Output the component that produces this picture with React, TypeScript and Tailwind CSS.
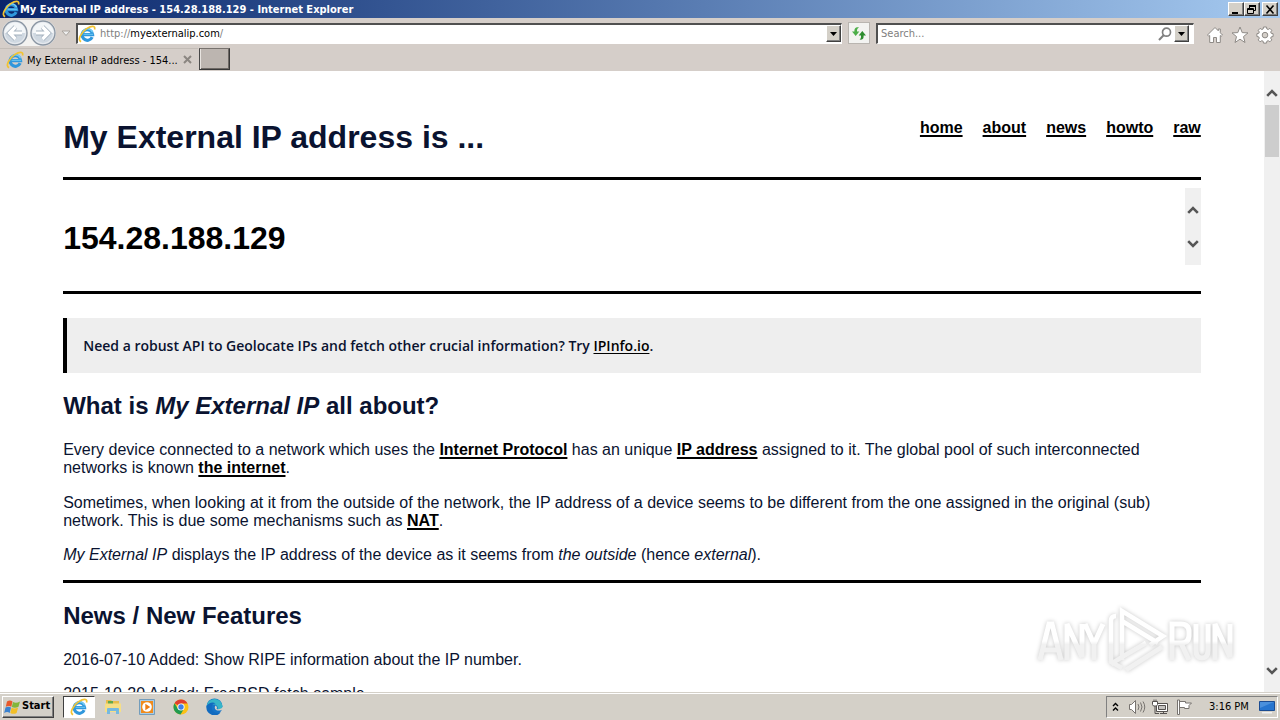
import type { ReactNode } from "react";

const linkClass = "font-bold text-black underline decoration-2 underline-offset-2 [text-decoration-skip-ink:none]";

function IELogo({ size = 16 }: { size?: number }) {
  return (
    <svg width={size} height={size} viewBox="0 0 16 16" className="shrink-0" aria-hidden="true">
      <path d="M12.600 10.800A4.700 4.700 0 1 1 13 8.600H4.600" fill="none" stroke="#2f97dc" strokeWidth="2.800" />
      <path d="M4.100 6.800Q5.500 3.500 8.500 3.500t4.500 3" fill="none" stroke="#74cdf5" strokeWidth="1.200" />
      <path d="M5 8.300h8.500" stroke="#67c4f1" strokeWidth="1" />
      <path d="M2.800 14.800C-1 13.800 2.600 6.500 8 3 12 .5 15.800.3 14.700 4" fill="none" stroke="#f2c331" strokeWidth="1.500" />
    </svg>
  );
}

function Triangle() {
  return (
    <svg width="7" height="4" viewBox="0 0 7 4" aria-hidden="true">
      <path d="M0 0h7L3.500 4z" fill="#000" />
    </svg>
  );
}

function Chevron({ up = false }: { up?: boolean }) {
  return (
    <svg width="12" height="8" viewBox="0 0 12 8" aria-hidden="true">
      <path d={up ? "M1.200 6.800 6 2l4.800 4.800" : "M1.200 1.200 6 6l4.800-4.800"} fill="none" stroke="#555" strokeWidth="2.600" />
    </svg>
  );
}

const raised = "border border-t-white border-l-white border-r-[#404040] border-b-[#404040] bg-[#d4d0c8] shadow-[inset_-1px_-1px_0_#808080]";

function WindowButton({ label, children }: { label: string; children: ReactNode }) {
  return (
    <button aria-label={label} className={`flex h-[14px] w-4 items-center justify-center ${raised}`}>
      <svg width="12" height="11" viewBox="0 0 12 11" fill="none" stroke="#000" aria-hidden="true">{children}</svg>
    </button>
  );
}

function TitleBar() {
  return (
    <header className="flex h-[18px] shrink-0 items-center bg-linear-to-r from-[#0a246a] to-[#a6caf0] px-[2px]">
      <IELogo size={18} />
      <span className="flex-1 pt-[1px] text-[11px] leading-[16px] font-bold text-white">My External IP address - 154.28.188.129 - Internet Explorer</span>
      <WindowButton label="Minimize"><path d="M2 9h6" strokeWidth="2" /></WindowButton>
      <WindowButton label="Restore">
        <path d="M4 1.500h6M3.500 1v3M9.500 1v5.500H8" />
        <path d="M3.500 2.500h6M1.500 5.500h6M1.500 4.500h6v5h-6z" />
      </WindowButton>
      <span className="w-[2px]" />
      <WindowButton label="Close"><path d="m2.500 1.500 7 8m0-8-7 8" strokeWidth="1.600" /></WindowButton>
    </header>
  );
}

function NavButton({ label, back = false }: { label: string; back?: boolean }) {
  const arrow = back ? "M20 13H8m5.500-6-6 6 6 6" : "M6 13h12m-5.500-6 6 6-6 6";
  return (
    <button aria-label={label} className="size-[26px]">
      <svg width="26" height="26" viewBox="0 0 26 26" aria-hidden="true">
        <circle cx="13" cy="13" r="12" fill="#e4e8ed" stroke="#8b96a3" strokeWidth="1.400" />
        <path d="M2.500 13a10.500 10.500 0 0 1 21 0z" fill="#f3f6f8" />
        <path d="M3 13h20a10 10 0 0 1-20 0z" fill="#cfd8e1" />
        <path d={arrow} fill="none" stroke="#a3b0bd" strokeWidth="4.800" />
        <path d={arrow} fill="none" stroke="#fff" strokeWidth="3.200" />
      </svg>
    </button>
  );
}

const field = "flex h-[21px] items-center border-t-2 border-l-2 border-r border-b border-t-[#505050] border-l-[#505050] border-r-white border-b-white bg-white";

function AddressBar() {
  return (
    <div className="flex h-[30px] shrink-0 items-center pr-[6px] pl-[2px]">
      <div className="flex gap-[2px] rounded-full bg-[#f3f2f0]">
        <NavButton label="Back" back />
        <NavButton label="Forward" />
      </div>
      <button aria-label="Recent pages" className="flex w-[20px] justify-center">
        <svg width="10" height="7" viewBox="0 0 10 7" aria-hidden="true"><path d="M1 1h8L5 5.500z" fill="#eee" stroke="#aaa49e" /></svg>
      </button>
      <div className={`flex-1 ${field}`}>
        <IELogo size={18} />
        <div className="ml-1 flex h-[18px] flex-1 items-center text-[11px] leading-[16px] text-[#808080]">
          <label htmlFor="address">http://</label>
          <input id="address" defaultValue="myexternalip.com" className="field-sizing-content h-4 text-black outline-none" />
          <span>/</span>
        </div>
        <button aria-label="Show address history" className={`flex h-[17px] w-[15px] items-center justify-center ${raised}`}><Triangle /></button>
      </div>
      <button aria-label="Refresh" className="mx-[6px] flex size-[22px] items-center justify-center border border-[#b9b5b0] bg-[#f3f3f1]">
        <svg width="16" height="15" viewBox="0 0 16 15" aria-hidden="true">
          <path d="M8 1.500C4.500.800 3.200 2.500 3.400 5.500H1L4.700 10l3.600-4.500H6C5.900 3.500 6.300 2.200 8 1.500z" fill="#4cae48" />
          <path d="M8.500 13.500c3.500.7 4.300-1 4.100-4H15L11.300 5 7.700 9.500H10c.1 2 0 3.300-1.500 4z" fill="#2c8c2e" />
        </svg>
      </button>
      <div className={`w-[318px] pr-1 pl-[3px] ${field}`}>
        <input aria-label="Search" placeholder="Search..." className="h-4 min-w-0 flex-1 text-[11px] leading-[16px] outline-none placeholder:text-[#808080]" />
        <button aria-label="Start search" className="mr-[2px]">
          <svg width="14" height="14" viewBox="0 0 14 14" fill="none" stroke="#808080" aria-hidden="true">
            <circle cx="8.500" cy="5.200" r="4" strokeWidth="1.700" />
            <path d="M5.600 8.200 1 13" strokeWidth="2" />
          </svg>
        </button>
        <button aria-label="Search options" className={`flex h-[17px] w-[15px] items-center justify-center ${raised}`}><Triangle /></button>
      </div>
      <div className="ml-3 flex items-center gap-[7px] pt-1">
        <button aria-label="Home">
          <svg width="18" height="18" viewBox="0 0 18 18" fill="#fff" stroke="#8e8a86" strokeLinejoin="round" aria-hidden="true">
            <path d="M9 1.500 1.500 9l1.300 1.300.9-.8V16.500h3.800v-5h3v5h3.800v-7l.9.8L16.500 9l-2.200-2.200V3h-2v1.800z" />
          </svg>
        </button>
        <button aria-label="Favorites">
          <svg width="18" height="18" viewBox="0 0 18 18" fill="#fff" stroke="#8e8a86" strokeLinejoin="round" aria-hidden="true">
            <path d="m9 1 2.200 5.600 5.800.3-4.500 3.700L14 16.500 9 13.200l-5 3.300 1.500-5.900L1 6.900l5.800-.3z" />
          </svg>
        </button>
        <button aria-label="Tools">
          <svg width="18" height="18" viewBox="0 0 18 18" fill="#fff" stroke="#8e8a86" strokeLinejoin="round" aria-hidden="true">
            <path d="m7.500 1h3l.4 2 1.300.5 1.700-1.100 1.900 1.900-1.100 1.700.5 1.300 1.900.4v2.800l-1.900.4-.5 1.300 1.100 1.700-1.900 1.900-1.700-1.100-1.300.5-.4 1.900h-3l-.4-1.900-1.300-.5-1.700 1.100-1.900-1.900 1.100-1.700-.5-1.300L.9 10.500V7.700l1.900-.4.5-1.300-1.100-1.700 1.900-1.900 1.700 1.100L7.100 3z" />
            <circle cx="9" cy="9.100" r="2.800" fill="#d4cfc9" />
          </svg>
        </button>
      </div>
    </div>
  );
}

function TabStrip() {
  return (
    <div className="flex h-[23px] shrink-0 items-start">
      <div className="flex h-[22px] w-[198px] items-center border-t border-[#c3bdb7] pl-[6px]">
        <IELogo size={18} />
        <button className="ml-[3px] w-[154px] pt-[2px] text-left text-[11px] leading-[16px] whitespace-nowrap">My External IP address - 154...</button>
        <button aria-label="Close tab" className="ml-[2px]">
          <svg width="9" height="9" viewBox="0 0 9 9" stroke="#8b8681" strokeWidth="2" aria-hidden="true"><path d="m1 1 7 7m0-7L1 8" /></svg>
        </button>
      </div>
      <button aria-label="New tab" className="ml-[1px] h-[22px] w-[31px] border border-t-[#77726e] border-r-[#383838] border-b-[#383838] border-l-[#484848] bg-[#bcb5b0] shadow-[inset_1px_0_0_#e8e4e0,inset_-1px_-1px_0_#6e6965]" />
    </div>
  );
}

function Rule() {
  return <hr className="border-t-[3px] border-black" />;
}

const headingClass = "mt-[19px] text-[24px] leading-[27px] font-bold";

function Article() {
  return (
    <main className="px-[5%] text-[16px] leading-[18px] text-[#0a1330]">
      <div className="flex items-start justify-between pt-12 pb-[22px]">
        <h1 className="text-[32px] leading-[36px] font-bold">My External IP address is ...</h1>
        <nav className="flex gap-5">
          {["home", "about", "news", "howto", "raw"].map((item) => (
            <a key={item} href={`#${item}`} className={linkClass}>{item}</a>
          ))}
        </nav>
      </div>
      <Rule />
      <div className="flex justify-between pt-2 pb-[26px]">
        <p className="pt-8 text-[32px] leading-[36px] font-bold text-black">154.28.188.129</p>
        <div className="flex h-[77px] w-4 flex-col items-center justify-center gap-[26px] bg-[#f0f0f0]">
          <Chevron up />
          <Chevron />
        </div>
      </div>
      <Rule />
      <p className="mt-6 border-l-4 border-black bg-[#eee] py-[18px] pl-4 font-['Open_Sans',sans-serif] text-[14px] leading-[19px] font-semibold">
        Need a robust API to Geolocate IPs and fetch other crucial information? Try{" "}
        <a href="#ipinfo" className="text-black underline decoration-1 underline-offset-2 [text-decoration-skip-ink:none]">IPInfo.io</a>.
      </p>
      <h2 className={headingClass}>What is <em>My External IP</em> all about?</h2>
      <p className="mt-[22px]">
        Every device connected to a network which uses the <a href="#protocol" className={linkClass}>Internet Protocol</a> has an unique{" "}
        <a href="#ip-address" className={linkClass}>IP address</a> assigned to it. The global pool of such interconnected networks is known{" "}
        <a href="#internet" className={linkClass}>the internet</a>.
      </p>
      <p className="mt-[17px]">
        Sometimes, when looking at it from the outside of the network, the IP address of a device seems to be different from the one assigned in
        the original (sub) network. This is due some mechanisms such as <a href="#nat" className={linkClass}>NAT</a>.
      </p>
      <p className="my-4">
        <em>My External IP</em> displays the IP address of the device as it seems from <em>the outside</em> (hence <em>external</em>).
      </p>
      <Rule />
      <h2 className={headingClass}>News / New Features</h2>
      <p className="mt-[22px]">2016-07-10 Added: Show RIPE information about the IP number.</p>
      <p className="mt-4">2015-10-20 Added: FreeBSD fetch sample.</p>
    </main>
  );
}

function Watermark() {
  return (
    <div className="pointer-events-none absolute right-11 bottom-4" aria-hidden="true">
      <svg width="200" height="70" viewBox="0 0 200 70" className="drop-shadow-[0_0_2px_rgba(0,0,0,0.22)]">
        <defs>
          <linearGradient id="mark" gradientUnits="userSpaceOnUse" x1="0" y1="0" x2="0" y2="70">
            <stop offset="0.5" stopColor="#ffffff" />
            <stop offset="0.55" stopColor="#f1f1f1" />
          </linearGradient>
        </defs>
        <g fill="none" stroke="url(#mark)" strokeWidth="5">
          <path d="M4 54 13 18h3l9 36M8 44h13M31 54V18l15 33V18M49 18l9 20 9-20M58 36v18" />
          <path d="M80 10q-5 0-5 5v41l11 6M86 54V5l41 25-13 9M86 15l36 22M90 64l36-23M75 58l11-7 24-14" strokeWidth="4.500" />
          <path d="M136 54V18h9q8 0 8 8v3q0 8-8 8h-9m9 0 8 17M160 18v26q0 8 6 8t6-8V18M179 54V18l15 33V18" />
        </g>
      </svg>
    </div>
  );
}

function PageScrollbar() {
  return (
    <div className="flex w-4 shrink-0 flex-col items-center bg-[#f0f0f0] pt-[18px] pb-[17px]">
      <Chevron up />
      <div className="mt-2 h-[52px] w-[14px] bg-[#cdcdcd]" />
      <div className="flex-1" />
      <Chevron />
    </div>
  );
}

function Taskbar() {
  return (
    <footer className="flex h-7 shrink-0 items-center border-t border-[#d4d0c8] bg-[#d4d0c8] px-[2px] shadow-[inset_0_1px_0_#fff]">
      <button className={`flex h-[22px] w-[52px] items-center gap-[1px] pl-[1px] text-[11px] font-bold ${raised}`}>
        <svg width="17" height="16" viewBox="0 0 17 16" className="shrink-0" aria-hidden="true">
          <path d="M3 2.500q3-2 5.500 0L7.300 7.800Q5 6 1.800 7.800z" fill="#e8592b" />
          <path d="M9 3q3 1.700 7-.5l-1.500 5.300Q11 9.500 7.800 8z" fill="#83b63b" />
          <path d="M1.500 8.500q3-1.500 5.500 0l-1.300 5.500q-2.500-2-5.500 0z" fill="#3b82d0" />
          <path d="M7.600 8.800q3 1.500 6.500-.3L12.600 14q-3 1.700-6.300 0z" fill="#f2bf27" />
        </svg>
        Start
      </button>
      <nav aria-label="Running programs" className="ml-[9px] flex items-center gap-[1px]">
        <button aria-label="Internet Explorer" className="flex h-[22px] w-8 items-center justify-center border border-t-[#404040] border-l-[#404040] border-r-white border-b-white bg-white"><IELogo size={18} /></button>
        <button aria-label="File Explorer" className="flex w-[33px] justify-center">
          <svg width="18" height="17" viewBox="0 0 18 17" aria-hidden="true">
            <path d="M2 2h5l1 1h7v11H2z" fill="#e7bd4d" />
            <path d="M4 3h5v3H4z" fill="#61a84d" />
            <path d="M1 5.500h16V14H1z" fill="#f6df86" />
            <path d="M3 16v-5q0-1 1-1h10q1 0 1 1v5h-3v-3H6v3z" fill="#76b9df" />
          </svg>
        </button>
        <button aria-label="Media Player" className="flex w-[33px] justify-center">
          <svg width="16" height="16" viewBox="0 0 16 16" aria-hidden="true">
            <path d="M.5.500h15v15H.500z" fill="#a9cce6" stroke="#739dbc" />
            <path d="M2 2h12v12H2z" fill="#f08b1d" />
            <circle cx="8" cy="8" r="4.800" fill="#fff" />
            <path d="m6.300 4.800 5 3.200-5 3.200z" fill="#ed7d15" />
          </svg>
        </button>
        <button aria-label="Chrome" className="flex w-[33px] justify-center">
          <svg width="16" height="16" viewBox="0 0 16 16" aria-hidden="true">
            <circle cx="8" cy="8" r="7.500" fill="#fbc116" />
            <path d="M8 8 1.500 4.200A7.500 7.500 0 0 1 14.500 4.500H8z" fill="#df3e30" />
            <path d="M1.500 4.200A7.500 7.500 0 0 0 7.500 15.500L11 9.700 5 10z" fill="#219b51" />
            <circle cx="8" cy="8" r="3.600" fill="#fff" />
            <circle cx="8" cy="8" r="2.700" fill="#3e80e8" />
          </svg>
        </button>
        <button aria-label="Edge" className="flex w-[33px] justify-center">
          <svg width="17" height="17" viewBox="0 0 17 17" aria-hidden="true">
            <circle cx="8.500" cy="8.500" r="8" fill="#1674c8" />
            <path d="M.6 8A8 8 0 0 1 16.500 8c0 3-2.500 4-5 3.500 1-3-1-5-4-5S2 7.500.6 8z" fill="#37b5c8" />
            <path d="M.6 8c2-3 6-4.500 9-2.500-4 0-5 4-3 7 2 2.500 5 3 8 2A8 8 0 0 1 .6 8z" fill="#126bbf" />
            <path d="M9.500 7.500c-1.500 2-.5 4.500 2 5 2 .4 4-.2 5.500-1.500V8.500c-1 2.500-4.500 3.300-6.500 2.500 1-1 .5-2.500-1-3.500z" fill="#d4d0c8" />
          </svg>
        </button>
      </nav>
      <div className="ml-auto flex h-[22px] w-[172px] items-center border border-t-[#808080] border-l-[#808080] border-r-white border-b-white pr-[2px] pl-[5px]">
        <button aria-label="Show hidden icons">
          <svg width="7" height="10" viewBox="0 0 7 10" fill="none" stroke="#000" strokeWidth="1.400" aria-hidden="true"><path d="m1 4 2.500-2.500L6 4M1 8.500 3.500 6 6 8.500" /></svg>
        </button>
        <button aria-label="Volume" className="ml-[9px]">
          <svg width="18" height="16" viewBox="0 0 18 16" fill="none" stroke="#77736f" aria-hidden="true">
            <path d="M1.500 5.500h2l4-4v13l-4-4h-2z" fill="#fff" /><path d="M10 5q2 3 0 6M12.500 3.500q3 4.500 0 9M15 2.500q3.500 5.500 0 11" />
          </svg>
        </button>
        <button aria-label="Network" className="ml-[6px]">
          <svg width="17" height="16" viewBox="0 0 17 16" stroke="#55514f" fill="#fff" aria-hidden="true">
            <path d="M4.500 4.500h11v8h-11zM8 14.500h7M11.500 12.500v2" /><path d="M6.500 6.500h7v4h-7z" fill="#c4c2bf" /><path d="M.5 2.500h5v3l-1 1.500h-3l-1-1.500zM2 .5v2M4 .5v2" /><path d="M3 7v7.500h4" fill="none" />
          </svg>
        </button>
        <button aria-label="Action Center" className="ml-[7px]">
          <svg width="17" height="16" viewBox="0 0 17 16" stroke="#77736f" fill="#fff" aria-hidden="true">
            <path d="M1.500 1v14.500h2V1zM3.500 2.500h6v1.500h6l-2.500 2.500v3H8.500V8.500h-5z" />
          </svg>
        </button>
        <time className="ml-4 flex-1 pt-[1px] text-[11px] leading-[16px] whitespace-nowrap">3:16 PM</time>
        <button aria-label="Show desktop">
          <svg width="16" height="14" viewBox="0 0 16 14" aria-hidden="true"><path d="M.5 1.500h15v9H.500z" fill="#2675cf" stroke="#1b4c92" /><path d="M1 2h14L1 8z" fill="#4a90dc" /><path d="M3 12h10v1.500H3z" fill="#f0f0f0" /></svg>
        </button>
      </div>
    </footer>
  );
}

export default function App() {
  return (
    <div className="flex h-screen flex-col overflow-hidden bg-[#d5cec9] font-['DejaVu_Sans_Condensed','DejaVu_Sans',sans-serif] text-black">
      <TitleBar />
      <AddressBar />
      <TabStrip />
      <div className="relative flex min-h-0 flex-1 bg-white font-['Liberation_Sans',Arial,sans-serif]">
        <div className="min-w-0 flex-1 overflow-hidden">
          <Article />
        </div>
        <PageScrollbar />
        <Watermark />
      </div>
      <Taskbar />
    </div>
  );
}
